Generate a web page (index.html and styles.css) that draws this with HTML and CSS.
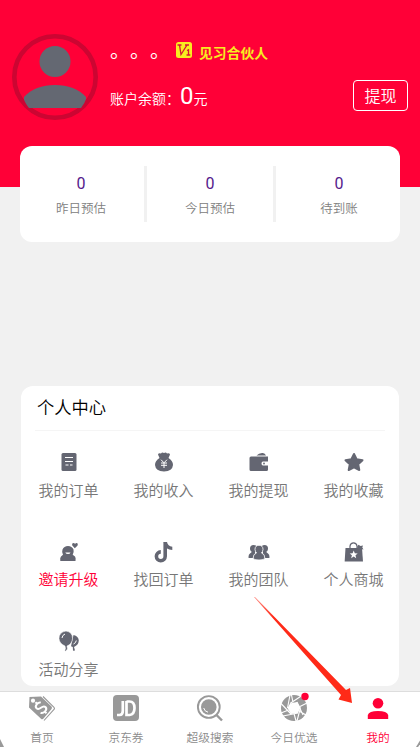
FILE: index.html
```html
<!DOCTYPE html>
<html lang="zh-CN">
<head>
<meta charset="utf-8">
<title>我的</title>
<link rel="stylesheet" href="styles.css">
</head>
<body>
<div class="app">
  <header class="profile">
    <svg class="avatar" viewBox="0 0 86 86"><circle cx="43" cy="43" r="40.7" fill="none" stroke="#cc0532" stroke-width="4.6"/><circle cx="43" cy="27.500" r="15.500" fill="#646872"/><path d="M12 65.500V63C19 55 30 51 43 51S67 55 74 63V65Q73 69 69 74H17Q13 69 12 65.500Z" fill="#646872"/></svg>
    <div class="info">
      <div class="name-row">
        <span class="name">。。。</span>
        <svg class="level" viewBox="0 0 16 16"><rect width="16" height="16" rx="2.500" fill="#f8ec20"/><path d="M1.500 3H5.500M3.500 3L5 12.500L11 3M9 3H13M11 8.500L12.500 7.800V13M10.500 13H14.300" fill="none" stroke="#d71235" stroke-width="1.300"/></svg>
        <span class="rank">见习合伙人</span>
      </div>
      <div class="balance">账户余额：<span class="amount">0</span>元</div>
    </div>
    <button class="withdraw">提现</button>
  </header>

  <section class="stats">
    <div class="stat"><b>0</b><span>昨日预估</span></div>
    <div class="stat"><b>0</b><span>今日预估</span></div>
    <div class="stat"><b>0</b><span>待到账</span></div>
  </section>

  <section class="center">
    <h2>个人中心</h2>
    <div class="menu">
      <div class="item"><svg viewBox="0 0 20 20"><rect x="2.500" y="1" width="15" height="18" rx="1.500"/><path class="cut" d="M6 5.500H14M6 9.500H14M6.500 13H9.500M11 13H13.500"/></svg><span>我的订单</span></div>
      <div class="item"><svg viewBox="0 0 20 20"><path d="M5.500 6L4 2.500Q4.500 .7 7 1.500Q8 0 10 1Q12 0 13 1.500Q15.500 .7 16 2.500L14.500 6Q19 9 19 13Q18.500 19 10 19.500Q1.500 19 1 13Q1 9 5.500 6Z"/><path class="cut thin" d="M7 7.700L10 10.800L13 7.700M7 11H13M7 13.300H13M10 10.800V16"/></svg><span>我的收入</span></div>
      <div class="item"><svg viewBox="0 0 20 20"><path d="M7.500 3.500Q10 .8 13.500 1Q16 .8 17 3.500Z"/><path d="M2 4.500H19V9.500H14Q12.500 9.500 12.500 11.500T14 13.500H19V17.500Q19 19 17.500 19H2Q.5 19 .5 17.500V6Q.5 4.500 2 4.500Z"/><circle cx="15" cy="11.500" r=".9"/></svg><span>我的提现</span></div>
      <div class="item"><svg viewBox="0 0 20 20"><path d="M10 2L12.600 7.300L18.500 8.200L14.200 12.300L15.300 18L10 15.400L4.700 18L5.800 12.300L1.500 8.200L7.400 7.300Z" stroke="#646672" stroke-width="2" stroke-linejoin="round"/></svg><span>我的收藏</span></div>
      <div class="item hot"><svg viewBox="0 0 20 20"><path d="M4 12.700Q2.500 10.500 3.500 7.500Q5 4 9 4Q13 4 14.500 7.500Q15.200 10.500 13.700 12.700L16 14.500Q17 15.500 16.500 19H1.300Q.8 15.500 2 14.500Z"/><path d="M15.800 6.200L13.300 3.600Q12.600 1 14.500 1Q15.700 1 16 2Q16.500 1 17.700 1Q19.500 1.300 18.600 3.600Z"/><path d="M6.300 10.500H11.500Q11 12 9 12T6.300 10.500Z" fill="#fff"/></svg><span>邀请升级</span></div>
      <div class="item"><svg viewBox="0 0 20 20"><path d="M11.200 .2V14.300A4.400 4.400 0 1 1 6.800 9.900" fill="none" stroke="#646672" stroke-width="3.600"/><path d="M9.400 0H13Q13.700 4.200 18.300 4.800V8Q15.300 8 12.500 6.300Z"/></svg><span>找回订单</span></div>
      <div class="item"><svg class="wide" viewBox="0 0 22 20"><circle cx="5.500" cy="6.500" r="3.500"/><circle cx="16.500" cy="6.500" r="3.500"/><path d="M4 8.500Q4 10.500 2 11.500Q.2 12.700 .6 16H7V8.500ZM18 8.500Q18 10.500 20 11.500Q21.800 12.700 21.400 16H15V8.500Z"/><path d="M7 7.500Q7 3.300 11 3.300T15 7.500Q14.700 9.700 13.500 11Q17 12 16.800 16Q16.500 18 11 18T5.200 16Q5 12 8.500 11Q7.300 9.700 7 7.500Z" stroke="#fff" stroke-width=".8"/></svg><span>我的团队</span></div>
      <div class="item"><svg viewBox="0 0 20 20"><path d="M1.500 6H18L19 19.500H.7Z"/><path d="M6 7V4Q6.500 .8 9.500 .8T13 4V7" fill="none" stroke="#646672" stroke-width="1.200"/><path d="M13 5L14.500 2.800L16.500 4L19 3.500L18.300 5.500L19.500 7.500L16.500 7L14 7.500Z"/><path d="M9.700 8.500L10.800 11.200L13.700 11.400L11.500 13.300L12.200 16.200L9.700 14.600L7.200 16.200L7.900 13.300L5.700 11.400L8.600 11.200Z" fill="#fff"/></svg><span>个人商城</span></div>
      <div class="item"><svg viewBox="0 0 20 20"><path d="M14.500 4Q19.500 5 19.800 9.500Q19.500 14 15 16L16 19.500L14 19.800L13.800 16L12 15.300Z"/><path d="M7 .1Q13.500 1 13.500 7.500Q13 13.200 8 15L8.500 18L6.500 20.300L5.800 19.500L6.500 17.500L6 15Q.3 12.500 0 7.500Q.2 1 7 .1Z" stroke="#fff" stroke-width=".5"/><path class="cut thin" d="M3 7Q3.300 4 6 3M14.500 13Q17 12 17.300 9.500"/></svg><span>活动分享</span></div>
    </div>
  </section>

  <nav class="tabs">
    <div class="tab"><svg viewBox="0 0 28 28"><path d="M1.500 2L13 1.500L23.500 11.500Q24.500 12.800 23.500 14L15.500 23.500Q14.300 25 13 23.700L1 12.500Z"/><path d="M15 1.500L26 12.300Q27 13.500 26 14.500L16 25.500" fill="none" stroke="#999" stroke-width="1.100"/><circle cx="5" cy="5.700" r="2.100" fill="#fff"/><path d="M16.500 9Q15.500 7.300 12.800 7.300Q9.500 7.500 9.500 10Q9.700 12.300 13 12.700Q16.700 13.200 16.700 15.700Q16.500 18.200 13 18.200Q10 18.200 9.200 16M13 5V7.300M13 18.200V20.500" fill="none" stroke="#fff" stroke-width="2" transform="rotate(-45 13 12.800)"/></svg><span>首页</span></div>
    <div class="tab"><svg viewBox="0 0 28 28"><rect x="1" y="0" width="26" height="26" rx="4"/><path d="M10.800 6V16Q10.800 20 7.500 20H5M14.500 6V20H17.500Q22.500 19.500 22.500 13T17.500 6.500H14.500" fill="none" stroke="#fff" stroke-width="2.700"/></svg><span>京东券</span></div>
    <div class="tab"><svg viewBox="0 0 28 28"><circle cx="12.800" cy="12" r="10.900" fill="none" stroke="#999" stroke-width="1.900"/><circle cx="12.800" cy="12" r="7.800"/><path d="M7.700 13Q8.500 16.500 12 17.200" fill="none" stroke="#fff" stroke-width="1"/><path d="M20.500 20L26 25.500" stroke="#999" stroke-width="2.400"/></svg><span>超级搜索</span></div>
    <div class="tab"><svg viewBox="0 0 28 28"><circle cx="14" cy="13" r="13"/><path d="M10 8.500L17 7L20.500 12.500L18 18L11 19L7.500 13Z" fill="#fff"/><path d="M10 8.500L20.500 1.500M17 7L23 20M13 7.500L11.500 0M20 11.500L27 8M20.500 12.500L17 26M18 18L3 21M19 16L26 20M11 19L1 8.500M14 18.500L16 26M7.500 13L10 0M8.500 15L1 18" stroke="#fff" stroke-width="1.100"/><circle cx="25" cy="1.500" r="3.700" fill="#ff0037"/></svg><span>今日优选</span></div>
    <div class="tab active"><svg viewBox="0 0 28 28"><circle cx="14" cy="8.200" r="5.300"/><path d="M3.800 24V20Q5 16 14 16T24.200 20V24Z"/></svg><span>我的</span></div>
  </nav>

  <svg class="pointer" viewBox="0 0 100 108"><defs><linearGradient id="trail" x1="0" y1="0" x2="1" y2="1"><stop offset="0" stop-color="#ff2a18" stop-opacity=".5"/><stop offset=".2" stop-color="#ff2a18"/></linearGradient></defs><path d="M-.5 -.5L.5 -.5L92 93L96 91L98 106L84.500 102.500L87 98Z" fill="url(#trail)"/></svg>
</div>
</body>
</html>
```
FILE: styles.css
```css
* { box-sizing: border-box; }
body {
  margin: 0;
  background: #f1f1f1;
  font-family: Roboto, "Noto Sans CJK SC", sans-serif;
  font-weight: 350;
}
.app {
  position: relative;
  height: 747px;
  display: flex;
  flex-direction: column;
  overflow: hidden;
}
.profile {
  flex: none;
  height: 187px;
  padding: 34px 12px 0;
  display: flex;
  align-items: flex-start;
  background: #ff0037;
  color: #fff;
}
.avatar { width: 86px; height: 86px; flex: none; }
.info { flex: 1; margin-left: 12px; }
.name-row { height: 38px; display: flex; align-items: flex-start; }
.name { width: 66px; font-size: 20px; line-height: 29px; padding-top: 3px; white-space: nowrap; text-spacing-trim: space-all; font-weight: 400; font-kerning: none; }
.level { width: 16px; height: 16px; margin-top: 8px; }
.rank { margin-left: 7px; color: #f8ec20; font-size: 13.800px; line-height: 20px; margin-top: 9px; font-weight: 700; }
.balance { font-size: 14px; line-height: 40px; height: 40px; margin-top: 4px; white-space: nowrap; }
.amount { font-size: 24px; font-weight: 400; }
.withdraw {
  width: 55px;
  height: 31px;
  margin-top: 46px;
  padding: 0;
  border: 1px solid #fff;
  border-radius: 4px;
  background: transparent;
  color: #fff;
  font: 350 16px/29px "Noto Sans CJK SC", sans-serif;
}
.stats {
  flex: none;
  height: 96px;
  margin: -41px 20px 0;
  padding: 20px 0;
  display: grid;
  grid-template-columns: 127px 129px 124px;
  background: #fff;
  border-radius: 12px;
}
.stat {
  display: flex;
  flex-direction: column;
  align-items: center;
  padding-top: 7px;
  border-right: 3px solid #f1f1f1;
}
.stat:last-child { border-right: 0; padding-left: 2px; }
.stat:first-child { padding-right: 2px; }
.stat b { color: #551a8b; font-size: 16px; font-weight: 400; line-height: 22px; }
.stat span { color: #808080; font-size: 12.500px; line-height: 18px; margin-top: 5px; }
.center {
  flex: none;
  height: 300px;
  margin: 144px 21px 0;
  background: #fff;
  border-radius: 12px;
}
.center h2 {
  height: 45px;
  margin: 0 14px;
  padding-left: 2px;
  border-bottom: 1px solid #f5f5f5;
  color: #000;
  font-size: 17.300px;
  font-weight: 350;
  line-height: 45px;
}
.menu { display: grid; grid-template-columns: repeat(4, 95px); grid-auto-rows: 89.500px; padding-top: 21px; }
.item { display: flex; flex-direction: column; align-items: center; color: #777; font-size: 15px; }
.item svg { width: 20px; height: 20px; fill: #646672; overflow: visible; }
.item .wide { width: 22px; }
.item span { line-height: 22px; margin-top: 7.500px; }
.cut { fill: none; stroke: #fff; stroke-width: 1.200; }
.thin { stroke-width: 1; }
.item.hot { color: #ff0037; }
.tabs {
  flex: none;
  height: 56px;
  margin-top: 5px;
  display: grid;
  grid-template-columns: repeat(5, 1fr);
  border-top: 1px solid #ddd;
  background: #fff;
}
.tab { display: flex; flex-direction: column; align-items: center; padding-top: 3px; color: #8c8c8c; font-size: 11.700px; }
.tab svg { width: 28px; height: 28px; fill: #999; overflow: visible; }
.tab span { line-height: 18px; margin-top: 6px; }
.tab.active { color: #ff0037; }
.active svg { fill: #ff0037; }
.pointer { position: absolute; left: 254px; top: 597px; width: 100px; height: 108px; }
.app::before, .app::after { content: ""; position: absolute; z-index: 1; bottom: 0; width: 4px; height: 8px; background: #999; }
.app::before { left: 0; clip-path: polygon(0 0, 100% 100%, 0 100%); }
.app::after { right: 0; clip-path: polygon(100% 20%, 100% 65%, 50% 100%, 0 100%); }
```
